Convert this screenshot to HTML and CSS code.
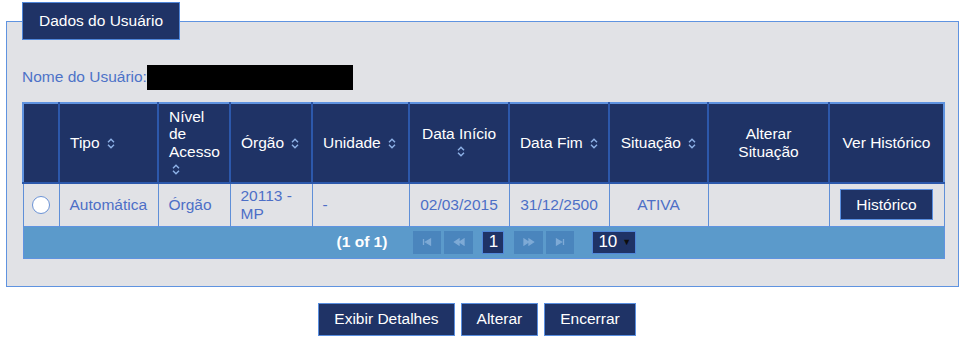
FILE: index.html
```html
<!DOCTYPE html>
<html lang="pt-BR">
<head>
<meta charset="utf-8">
<title>Dados do Usuário</title>
<link rel="stylesheet" href="styles.css">
</head>
<body>
<div class="page">
  <fieldset class="panel">
    <legend class="panel-legend">Dados do Usuário</legend>
    <div class="user-name">
      <span class="user-label">Nome do Usuário:</span><span class="redacted"></span>
    </div>
    <table class="grid">
      <colgroup>
        <col class="c-sel"><col class="c-tipo"><col class="c-nivel"><col class="c-orgao"><col class="c-unid"><col class="c-ini"><col class="c-fim"><col class="c-sit"><col class="c-alt"><col class="c-hist">
      </colgroup>
      <thead>
        <tr>
          <th></th>
          <th class="left">Tipo <svg class="sort" viewBox="0 0 8 11" width="8" height="11"><path d="M1 4.2 L4 1.2 L7 4.2 M1 6.8 L4 9.8 L7 6.8" /></svg></th>
          <th class="left">Nível de Acesso <svg class="sort" viewBox="0 0 8 11" width="8" height="11"><path d="M1 4.2 L4 1.2 L7 4.2 M1 6.8 L4 9.8 L7 6.8" /></svg></th>
          <th class="left">Órgão <svg class="sort" viewBox="0 0 8 11" width="8" height="11"><path d="M1 4.2 L4 1.2 L7 4.2 M1 6.8 L4 9.8 L7 6.8" /></svg></th>
          <th class="left">Unidade <svg class="sort" viewBox="0 0 8 11" width="8" height="11"><path d="M1 4.2 L4 1.2 L7 4.2 M1 6.8 L4 9.8 L7 6.8" /></svg></th>
          <th>Data Início <svg class="sort" viewBox="0 0 8 11" width="8" height="11"><path d="M1 4.2 L4 1.2 L7 4.2 M1 6.8 L4 9.8 L7 6.8" /></svg></th>
          <th>Data Fim <svg class="sort" viewBox="0 0 8 11" width="8" height="11"><path d="M1 4.2 L4 1.2 L7 4.2 M1 6.8 L4 9.8 L7 6.8" /></svg></th>
          <th>Situação <svg class="sort" viewBox="0 0 8 11" width="8" height="11"><path d="M1 4.2 L4 1.2 L7 4.2 M1 6.8 L4 9.8 L7 6.8" /></svg></th>
          <th>Alterar Situação</th>
          <th>Ver Histórico</th>
        </tr>
      </thead>
      <tbody>
        <tr class="row">
          <td class="sel"><span class="radio"></span></td>
          <td class="left">Automática</td>
          <td class="left">Órgão</td>
          <td class="left">20113 - MP</td>
          <td class="left">-</td>
          <td>02/03/2015</td>
          <td>31/12/2500</td>
          <td>ATIVA</td>
          <td></td>
          <td><button class="btn btn-small" type="button">Histórico</button></td>
        </tr>
        <tr>
          <td class="pager" colspan="10">
            <div class="pager-inner">
              <span class="report">(1 of 1)</span>
              <span class="pbtn first"><svg viewBox="0 0 10 8" width="10" height="8"><path d="M1.5 1 V7 M8.5 1 L3.5 4 L8.5 7 Z"/></svg></span>
              <span class="pbtn prev"><svg viewBox="0 0 12 8" width="12" height="8"><path d="M6 1 L1.5 4 L6 7 Z M11 1 L6.5 4 L11 7 Z"/></svg></span>
              <span class="page-num">1</span>
              <span class="pbtn next"><svg viewBox="0 0 12 8" width="12" height="8"><path d="M1 1 L5.5 4 L1 7 Z M6 1 L10.5 4 L6 7 Z"/></svg></span>
              <span class="pbtn last"><svg viewBox="0 0 10 8" width="10" height="8"><path d="M1.5 1 L6.5 4 L1.5 7 Z M8.5 1 V7"/></svg></span>
              <span class="rows-select">10 <span class="caret">▼</span></span>
            </div>
          </td>
        </tr>
      </tbody>
    </table>
  </fieldset>
  <div class="actions">
    <button class="btn" type="button">Exibir Detalhes</button>
    <button class="btn" type="button">Alterar</button>
    <button class="btn" type="button">Encerrar</button>
  </div>
</div>
</body>
</html>
```

FILE: styles.css
```css
html, body {
  margin: 0;
  padding: 0;
  background: #ffffff;
}

body {
  font-family: "Liberation Sans", Arial, sans-serif;
  font-size: 15.5px;
}

.page {
  padding: 2px 7px 0 6px;
}

.panel {
  margin: 0;
  border: 1px solid #5f93e0;
  background: #e1e2e6;
  padding: 0 15px 27px;
  min-width: 0;
}

.panel-legend {
  margin: 0;
  padding: 0 16px;
  height: 36px;
  line-height: 36px;
  background: #1f3366;
  border: 1px solid #4f86d9;
  color: #ffffff;
  font-size: 15.5px;
}

.user-name {
  display: flex;
  align-items: center;
  height: 25px;
  margin-top: 24px;
  margin-bottom: 13px;
  color: #4d72c8;
}

.redacted {
  display: inline-block;
  width: 206px;
  height: 25px;
  background: #000000;
  margin-top: 2px;
}

.grid {
  width: 921px;
  table-layout: fixed;
  border-collapse: collapse;
  border: 1px solid #5f93e0;
}

.c-sel { width: 36px; }
.c-tipo { width: 99px; }
.c-nivel { width: 72px; }
.c-orgao { width: 82px; }
.c-unid { width: 97px; }
.c-ini { width: 100px; }
.c-fim { width: 100px; }
.c-sit { width: 99px; }
.c-alt { width: 121px; }
.c-hist { width: 115px; }

.grid th {
  height: 80px;
  box-sizing: border-box;
  background: #1f3366;
  color: #ffffff;
  font-weight: normal;
  line-height: 17.7px;
  padding: 0 6px;
  text-align: center;
  vertical-align: middle;
  border: 2px solid #2c58ab;
  border-top-color: #5f93e0;
}

.grid th:first-child {
  border-left-color: #5f93e0;
}

.grid th:last-child {
  border-right-color: #5f93e0;
}

.grid th.left {
  text-align: left;
  padding-left: 10px;
}

.grid td.left {
  text-align: left;
}

.sort {
  display: inline-block;
  vertical-align: middle;
  margin-left: 3px;
  margin-top: -2px;
}

.sort path {
  fill: none;
  stroke: #8fb3e8;
  stroke-width: 1.4;
}

.row td {
  height: 43px;
  box-sizing: border-box;
  background: #e1e2e6;
  color: #4d6fc6;
  line-height: 17.7px;
  padding: 0 10px;
  text-align: center;
  vertical-align: middle;
  border: 1px solid #5f8fd8;
  border-top: none;
  border-bottom: none;
}

.row td.sel {
  padding: 0;
}

.radio {
  display: block;
  width: 18px;
  height: 18px;
  box-sizing: border-box;
  margin: 0 auto;
  border-radius: 50%;
  background: #ffffff;
  border: 1.5px solid #6b93d6;
}

.btn {
  font-family: "Liberation Sans", Arial, sans-serif;
  font-size: 15.5px;
  color: #ffffff;
  background: #1f3366;
  border: 1px solid #5a8fe0;
  padding: 0 15px;
  height: 33px;
  cursor: pointer;
}

.btn-small {
  height: 31px;
  padding: 0 15px;
}

.pager {
  background: #5b9acb;
  height: 31px;
  padding: 0;
  border-top: 1px solid #5f93e0;
}

.pager-inner {
  display: flex;
  align-items: center;
  justify-content: center;
  padding-left: 6px;
}

.report {
  color: #ffffff;
  font-weight: bold;
  margin-right: 26px;
}

.pbtn {
  display: flex;
  align-items: center;
  justify-content: center;
  height: 23px;
  background: #4a85bd;
}

.pbtn svg path {
  fill: #7eaad6;
  stroke: #7eaad6;
  stroke-width: 1.3;
}

.first { width: 28px; margin-right: 3px; }
.prev { width: 29px; margin-right: 9px; }
.next { width: 29px; margin-right: 3px; margin-left: 10px; }
.last { width: 28px; margin-right: 18px; }

.page-num {
  display: flex;
  align-items: center;
  justify-content: center;
  width: 22px;
  height: 23px;
  box-sizing: border-box;
  background: #1f3366;
  border: 1px solid #4f86d9;
  color: #ffffff;
  font-size: 17px;
}

.rows-select {
  display: flex;
  align-items: center;
  width: 44px;
  height: 23px;
  box-sizing: border-box;
  padding-left: 5px;
  background: #1f3366;
  border: 1px solid #4f86d9;
  color: #ffffff;
  font-size: 17px;
}

.caret {
  font-size: 9px;
  color: #0d0d0d;
  margin-left: 5px;
}

.actions {
  display: flex;
  justify-content: center;
  gap: 6px;
  margin-top: 16px;
  padding-right: 11px;
}
```
